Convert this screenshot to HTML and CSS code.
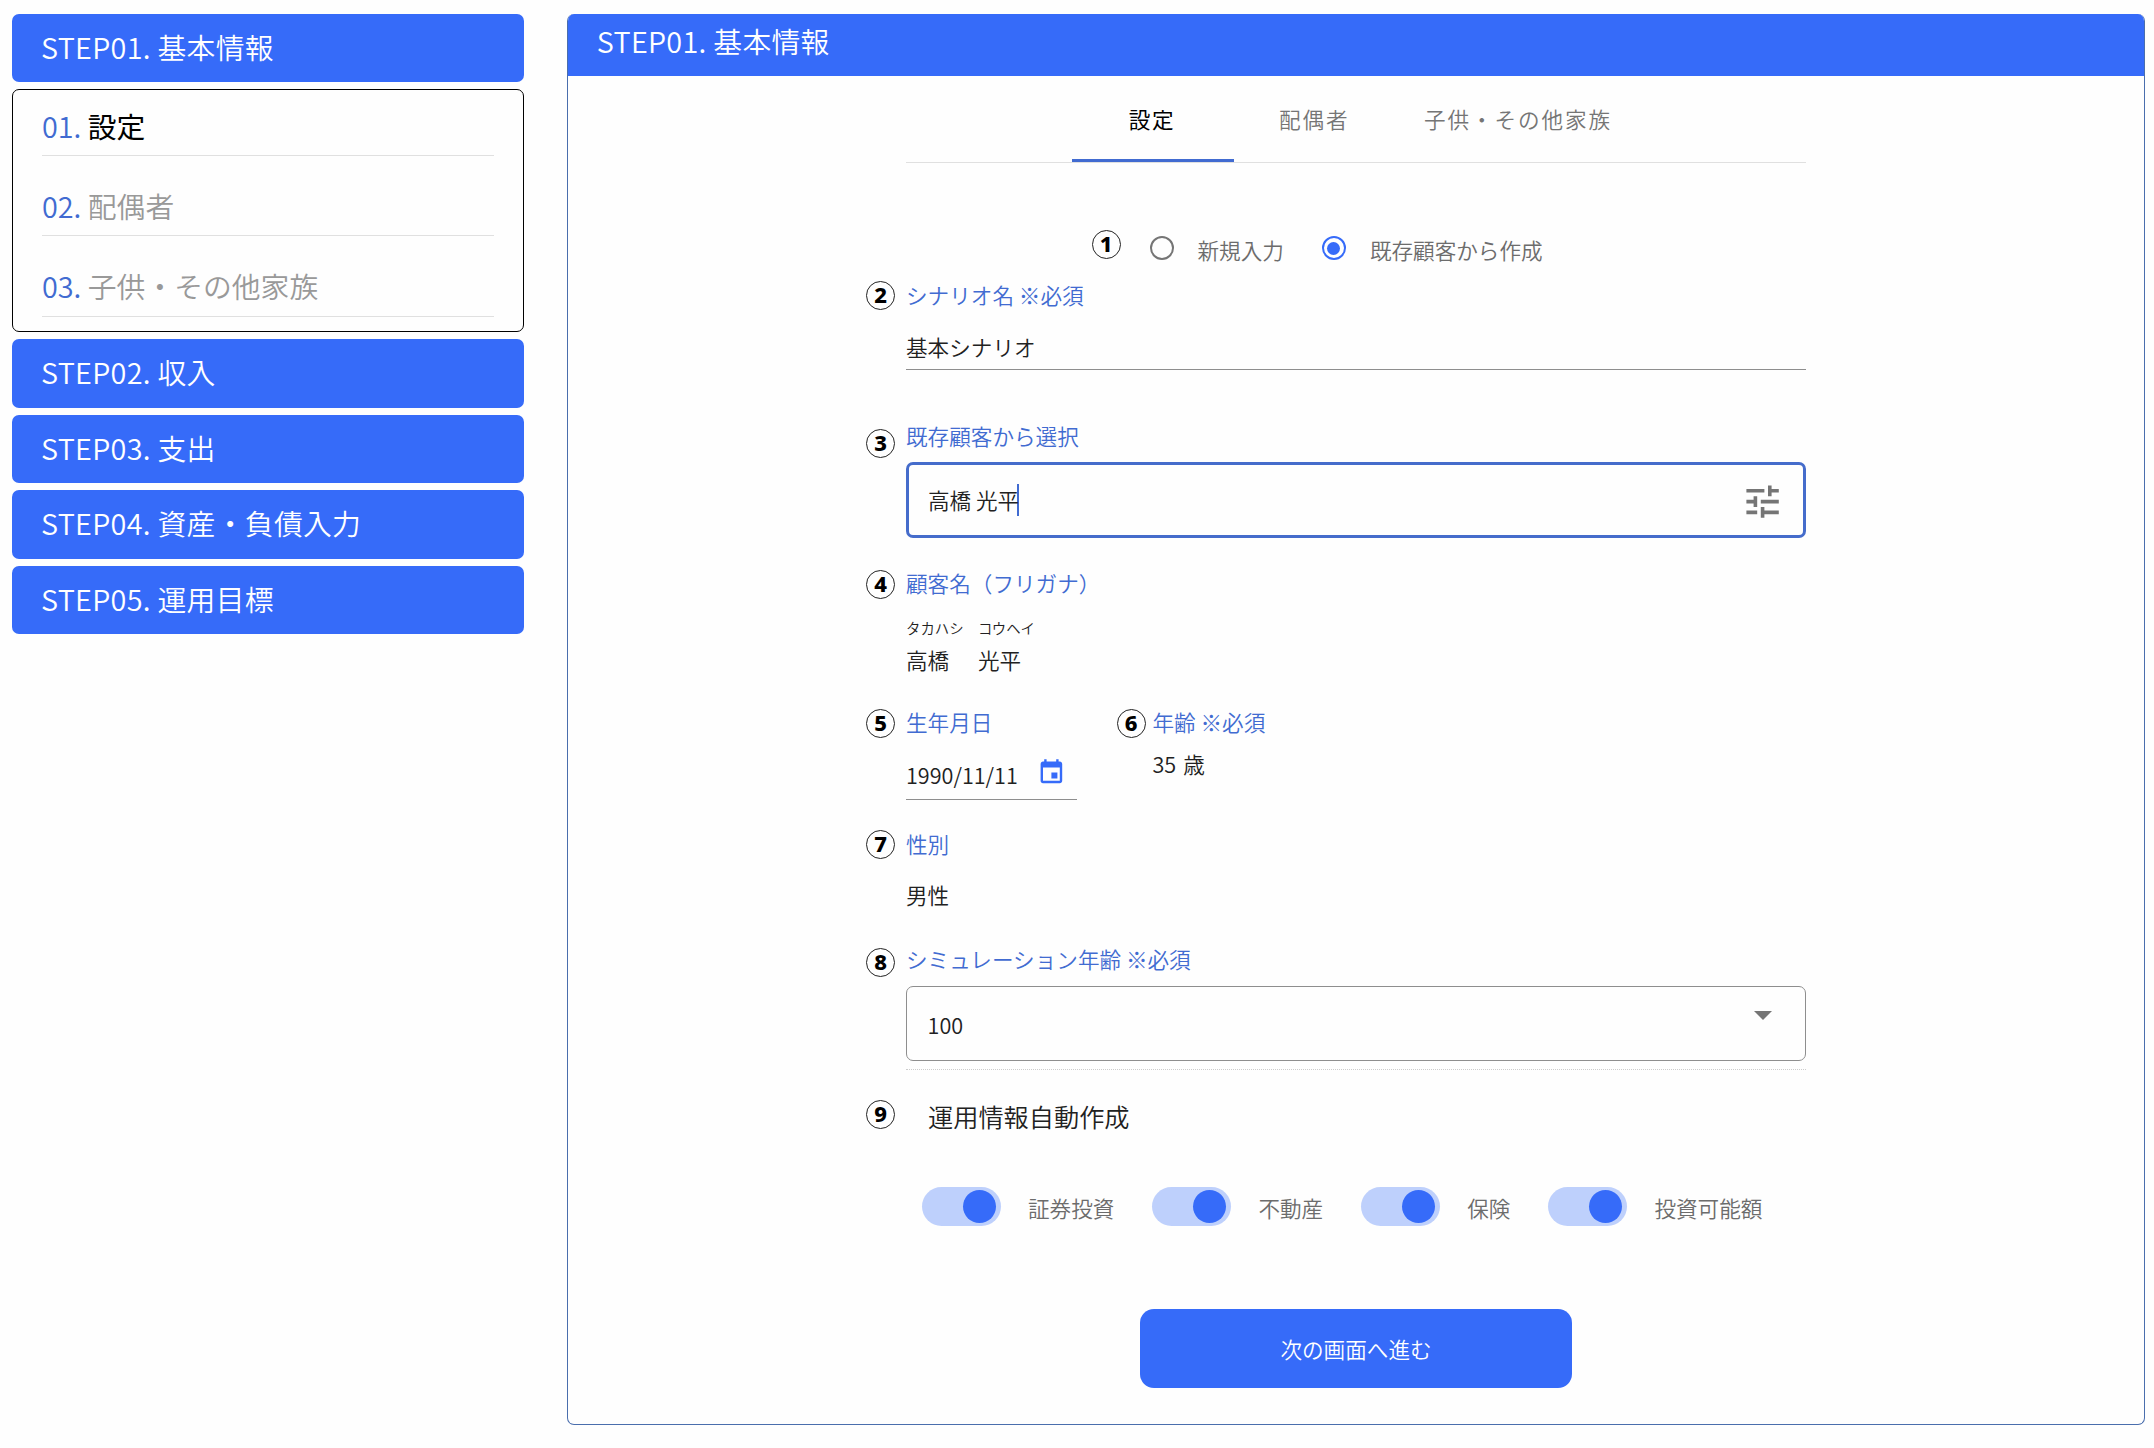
FILE: index.html
```html
<!DOCTYPE html>
<html lang="ja">
<head>
  <meta charset="UTF-8">
  <title>STEP01. 基本情報</title>
  <link rel="stylesheet" href="styles.css">
</head>
<body>

  <nav class="sidebar">
    <div class="step">STEP01. 基本情報</div>
    <ul class="submenu">
      <li class="active"><span>01.</span> 設定</li>
      <li><span>02.</span> 配偶者</li>
      <li><span>03.</span> 子供・その他家族</li>
    </ul>
    <div class="step">STEP02. 収入</div>
    <div class="step">STEP03. 支出</div>
    <div class="step">STEP04. 資産・負債入力</div>
    <div class="step">STEP05. 運用目標</div>
  </nav>

  <main class="panel">
    <h1 class="panel-title">STEP01. 基本情報</h1>

    <div class="form">
      <div class="tabs">
        <div class="tab active">設定</div>
        <div class="tab">配偶者</div>
        <div class="tab">子供・その他家族</div>
      </div>

      <div class="radios">
        <b class="num">1</b>
        <i class="radio"></i><span>新規入力</span>
        <i class="radio checked"></i><span>既存顧客から作成</span>
      </div>

      <section class="field scenario">
        <b class="num">2</b>
        <div class="label">シナリオ名 ※必須</div>
        <div class="line-input">基本シナリオ</div>
      </section>

      <section class="field customer">
        <b class="num">3</b>
        <div class="label">既存顧客から選択</div>
        <div class="box focused">
          <span class="typed">高橋 光平</span>
          <svg class="tune" viewBox="0 0 24 24"><path d="M3 17v2h6v-2H3zM3 5v2h10V5H3zm10 16v-2h8v-2h-8v-2h-2v6h2zM7 9v2H3v2h4v2h2V9H7zm14 4v-2H11v2h10zm-6-4h2V7h4V5h-4V3h-2v6z"/></svg>
        </div>
      </section>

      <section class="field fullname">
        <b class="num">4</b>
        <div class="label">顧客名（フリガナ）</div>
        <div class="names">
          <div><small>タカハシ</small>高橋</div>
          <div><small>コウヘイ</small>光平</div>
        </div>
      </section>

      <div class="row">
        <section class="field birthday">
          <b class="num">5</b>
          <div class="label">生年月日</div>
          <div class="date">
            <span>1990/11/11</span>
            <svg class="event" viewBox="0 0 24 24"><path d="M17 12h-5v5h5v-5zM16 1v2H8V1H6v2H5c-1.11 0-1.99.9-1.99 2L3 19c0 1.1.89 2 2 2h14c1.1 0 2-.9 2-2V5c0-1.1-.9-2-2-2h-1V1h-2zm3 18H5V8h14v11z"/></svg>
          </div>
        </section>
        <section class="field age">
          <b class="num">6</b>
          <div class="label">年齢 ※必須</div>
          <div class="age-value"><span>35</span><span>歳</span></div>
        </section>
      </div>

      <section class="field gender">
        <b class="num">7</b>
        <div class="label">性別</div>
        <div class="value">男性</div>
      </section>

      <section class="field simulation">
        <b class="num">8</b>
        <div class="label">シミュレーション年齢 ※必須</div>
        <div class="box select">
          <span>100</span>
          <i class="caret"></i>
        </div>
      </section>

      <section class="field auto">
        <b class="num">9</b>
        <h2>運用情報自動作成</h2>
        <div class="switches">
          <div class="switch"><i></i><span>証券投資</span></div>
          <div class="switch"><i></i><span>不動産</span></div>
          <div class="switch"><i></i><span>保険</span></div>
          <div class="switch"><i></i><span>投資可能額</span></div>
        </div>
      </section>

      <button class="next">次の画面へ進む</button>
    </div>
  </main>

</body>
</html>
```
FILE: styles.css
```css
* { box-sizing: border-box; }
body {
  margin: 0;
  padding: 14px 9px 0 12px;
  display: flex;
  align-items: flex-start;
  gap: 43px;
  background: #fefefe;
  color: #212121;
  font-family: "Noto Sans CJK JP", sans-serif;
  font-size: 21.6px;
  font-weight: 350;
  line-height: 36px;
}

/* sidebar */
.sidebar {
  width: 512px;
  display: flex;
  flex-direction: column;
  gap: 7.2px;
  font-size: 28.8px;
}
.step {
  height: 68.3px;
  padding-left: 29px;
  border-radius: 7px;
  background: #366bf9;
  color: #fff;
  letter-spacing: .3px;
  line-height: 66.6px;
}
.submenu {
  height: 242.6px;
  margin: 0;
  padding: 0 29px;
  border: 1px solid #000;
  border-radius: 7px;
  list-style: none;
}
.submenu li {
  height: 80.2px;
  padding-top: 13px;
  color: #999;
  line-height: 45px;
}
.submenu li + li { padding-top: 12px; }
.submenu li::after {
  content: "";
  display: block;
  margin-top: 7px;
  border-top: 1px solid #e0e0e0;
}
.submenu li:last-child::after { margin-top: 8px; }
.submenu li.active { color: #000; font-weight: 400; }
.submenu span { color: #416bd1; font-weight: 350; }

/* main panel */
.panel {
  flex: 1;
  height: 1411px;
  border: 1px solid #4a6ead;
  border-top: none;
  border-radius: 7px;
  overflow: hidden;
}
.panel-title {
  height: 62px;
  margin: 0;
  padding-left: 28.8px;
  background: #366bf9;
  color: #fff;
  font-size: 28.8px;
  font-weight: 350;
  letter-spacing: .3px;
  line-height: 53px;
}
.form { width: 900px; margin: 0 auto; }

.tabs {
  display: flex;
  justify-content: center;
  height: 87px;
  padding-left: 1px;
  border-bottom: 1px solid #e0e0e0;
}
.tab {
  min-width: 162px;
  padding: 0 29.4px 0 28.2px;
  color: #757575;
  letter-spacing: 1.9px;
  line-height: 86px;
  text-align: center;
}
.tab.active {
  color: #000;
  font-weight: 400;
  box-shadow: inset 0 -3px #416bd1;
}

.radios {
  position: relative;
  display: flex;
  align-items: center;
  margin-top: 69px;
  padding-left: 243.5px;
  color: #6c6c6c;
}
.radio {
  width: 24px;
  height: 24px;
  margin: -4px 24px 0 0;
  border: 2.5px solid #757575;
  border-radius: 50%;
}
.radio.checked { margin-left: 38px; border-color: #366bf9; padding: 3.5px; }
.radio.checked::before {
  content: "";
  display: block;
  height: 100%;
  border-radius: 50%;
  background: #366bf9;
}

.field { position: relative; }
.label { color: #416bd1; }

/* circled item numbers, hung outside the left edge */
.num {
  position: absolute;
  left: -40px;
  width: 29px;
  height: 29px;
  border: 1.5px solid #222;
  border-radius: 50%;
  color: #000;
  font: 800 22px/25px "Noto Sans", sans-serif;
  text-align: center;
}
.radios .num { left: 185.5px; top: -2px; }
.scenario .num { top: 4px; }
.customer .num { top: 11px; }
.fullname .num,
.birthday .num,
.age .num { top: 5px; }
.age .num { left: -36px; }
.gender .num { top: 4px; }
.simulation .num { top: 7px; }
.auto .num { top: 4px; }

.scenario { margin-top: 9px; }
.line-input {
  height: 41px;
  margin-top: 16px;
  border-bottom: 1px solid #8e8e8e;
}

.customer { margin-top: 48px; }
.box {
  display: flex;
  justify-content: space-between;
  align-items: center;
  border-radius: 7px;
}
.focused {
  height: 76px;
  margin-top: 8px;
  padding: 0 19px;
  border: 3px solid #456ccb;
}
.typed {
  width: 91px;
  line-height: 32px;
  white-space: nowrap;
  border-right: 2px solid #416bd1;
}
.tune { width: 43.2px; height: 43.2px; margin-top: 3px; fill: #757575; }

.fullname { margin-top: 27px; }
.names { display: flex; gap: 14.4px; margin-top: 17px; }
.names small {
  display: block;
  margin-bottom: 4px;
  font-size: 14.4px;
  line-height: 20px;
}

.row { display: flex; margin-top: 26px; }
.birthday { width: 171px; }
.date {
  display: flex;
  justify-content: space-between;
  height: 43px;
  margin-top: 17px;
  padding-right: 11.4px;
  border-bottom: 1px solid #8e8e8e;
}
.event { width: 28.8px; height: 28.8px; margin-top: 1px; fill: #366bf9; }
.age { margin-left: 75.5px; }
.age-value { display: flex; gap: 7px; margin-top: 6px; }

.gender { margin-top: 26px; }
.gender .value { margin-top: 15px; }

.simulation { margin-top: 28px; padding-bottom: 8px; border-bottom: 1px dotted #ccc; }
.select {
  height: 75px;
  margin-top: 9px;
  padding: 3px 33px 0 20.6px;
  border: 1px solid #8e8e8e;
}
.caret {
  margin-top: -20px;
  border: 9px solid transparent;
  border-top-color: #757575;
  border-bottom: 0;
}

.auto { margin-top: 26px; }
.auto h2 {
  margin: 0 0 51px 22px;
  font-size: 25.2px;
  font-weight: 350;
  line-height: 40px;
}
.switches { display: flex; gap: 38px; padding-left: 16px; color: #6c6c6c; }
.switch { display: flex; align-items: center; gap: 27px; }
.switch i {
  width: 79px;
  height: 39px;
  padding: 3px 5px 3px 41px;
  border-radius: 20px;
  background: #bed0fc;
}
.switch i::before {
  content: "";
  display: block;
  height: 33px;
  border-radius: 50%;
  background: #366bf9;
}
.switch span { margin-top: 2px; }

.next {
  display: block;
  width: 432px;
  height: 79px;
  margin: 83px auto 0;
  padding: 1px 0 0;
  border: none;
  border-radius: 14px;
  background: #366bf9;
  color: #fff;
  font: inherit;
}
```
